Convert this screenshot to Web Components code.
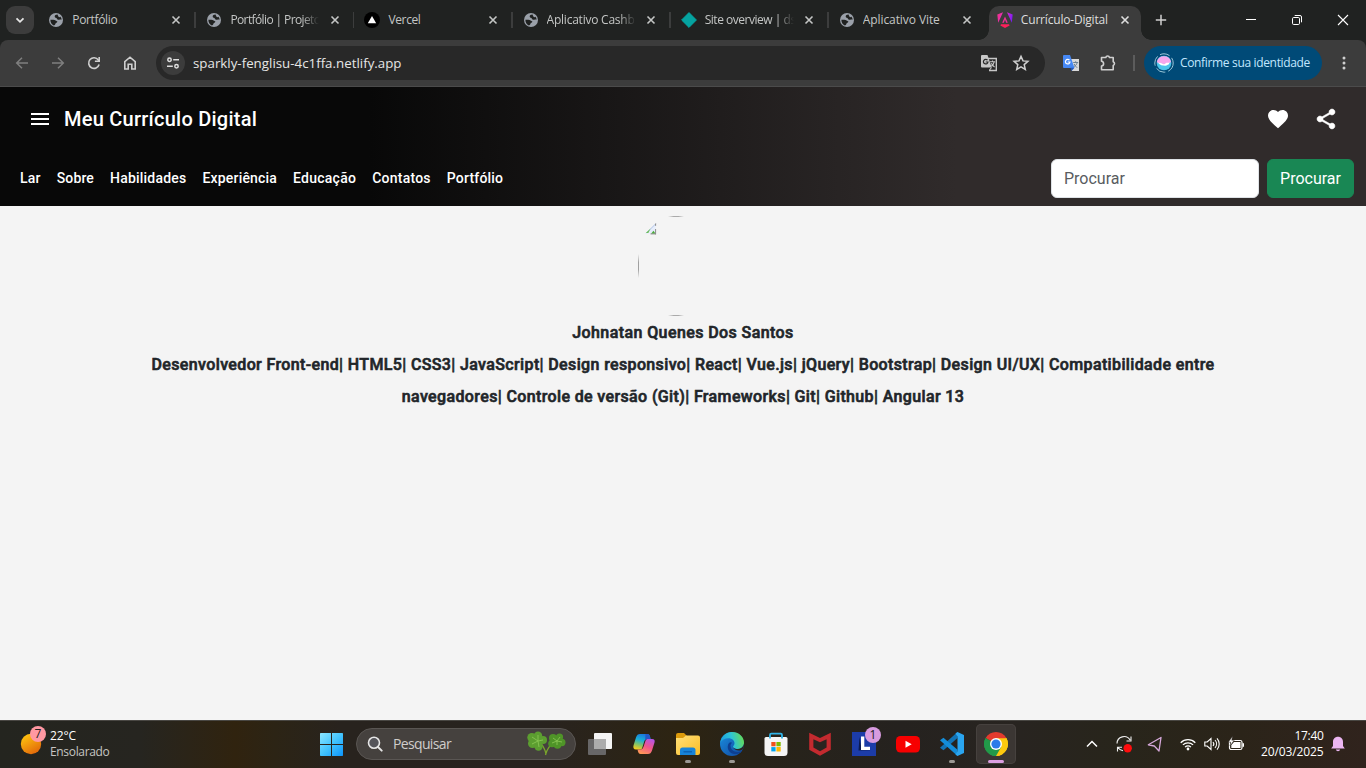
<!DOCTYPE html>
<html lang="pt-BR">
<head>
<meta charset="utf-8">
<title>Currículo-Digital</title>
<style>
html,body{margin:0;height:100%;overflow:hidden;background:#f4f4f4}
</style>
</head>
<body>
<desktop-screen></desktop-screen>
<script>
const UI = '"Open Sans","Noto Sans",sans-serif';
const define = (name, html, setup) => {
  const tpl = document.createElement('template');
  tpl.innerHTML = typeof html === 'string' ? html : '';
  customElements.define(name, class extends HTMLElement {
    connectedCallback() {
      if (this.shadowRoot) return;
      const root = this.attachShadow({ mode: 'open' });
      if (typeof html === 'function') root.innerHTML = html(this);
      else root.append(tpl.content.cloneNode(true));
      if (setup) setup(this, root);
    }
  });
};

/* A single-line label whose tracking is adjusted to span a given width. */
define('fit-text', '<style>:host{display:inline-block;white-space:pre;flex:none}</style><slot></slot>', el => {
  const w = +el.getAttribute('w');
  if (!w) return;
  const natural = el.getBoundingClientRect().width;
  el.style.letterSpacing = ((w - natural) / el.textContent.length) + 'px';
  el.style.width = w + 'px';
});

const ICONS = {
  globe: ['0 0 16 16', '<circle cx="8" cy="8" r="7" fill="#9aa0a9"/><path d="M2.400 7.800h3c1.800 0 2.700 1.600 4 1.600-.2 1.300-1.800 1.400-2 2.400-.2 1-.9 1.600-1.600 1.600C3.600 12.600 2.300 10.300 2.400 7.800z" fill="#202221"/><path d="M9.600 2.600C8 2.500 6.500 3.400 6.700 4.700c.2 1.200 1.900.7 2.100 1.700.2 1.200 1.900 1.700 3 1.200.8-.3 1.400-.2 1.900.1-.1-1.100-.5-2-1.200-2.900-1 .6-1.900.4-2.100-.3-.2-.7-.8-1.100-.8-1.900z" fill="#202221"/>'],
  vercel: ['0 0 16 16', '<circle cx="8" cy="8" r="8" fill="#000"/><path d="M8 4l4.200 7.300H3.800z" fill="#fff"/>'],
  diamond: ['0 0 16 16', '<path d="M8 .6L15.400 8 8 15.400.6 8z" fill="#05a3a0" stroke="#05a3a0" stroke-width="1" stroke-linejoin="round"/>'],
  angular: ['0 0 16 16', '<defs><linearGradient id="a" x1="0" x2="1" y1=".3" y2=".5"><stop offset="0" stop-color="#f0328b"/><stop offset=".5" stop-color="#e72bd0"/><stop offset="1" stop-color="#7a1bf2"/></linearGradient></defs><path d="M6 .3L.3 2.500l.9 8.300zM10 .3l5.700 2.200-.9 8.300z" fill="url(#a)"/><path d="M8 4.600L5.200 10.800h1.600L8 7.700l1.200 3.100h1.600z" fill="#f03098"/><path d="M4 12.200h8l.6 1.400L8 16l-4.600-2.400z" fill="#ff1f5a"/>'],
  close: ['0 0 10 10', '<path d="M1.500 1.500l7 7m0-7l-7 7" stroke="currentColor" stroke-width="1.600"/>'],
  chev: ['0 0 12 12', '<path d="M2.500 4.300L6 7.800l3.500-3.500" fill="none" stroke="#e6e6e6" stroke-width="1.800"/>'],
  plus: ['0 0 12 12', '<path d="M6 .8v10.400M.8 6h10.400" stroke="#d0d0d0" stroke-width="1.500"/>'],
  min: ['0 0 12 12', '<path d="M1 5.500h10" stroke="#fff"/>'],
  restore: ['0 0 12 12', '<rect x="1.500" y="3.500" width="7" height="7" rx="1.200" fill="none" stroke="#fff"/><path d="M3.700 1.500H9a1.500 1.500 0 0 1 1.500 1.500v5.300" fill="none" stroke="#fff"/>'],
  wclose: ['0 0 12 12', '<path d="M1 1l10 10m0-10L1 11" stroke="#fff" stroke-width="1.100"/>'],
  back: ['0 0 16 16', '<path d="M14 8H3m5-5.300L2.700 8 8 13.300" fill="none" stroke="#7f7f7f" stroke-width="1.500"/>'],
  fwd: ['0 0 16 16', '<path d="M2 8h11M8 2.700L13.300 8 8 13.300" fill="none" stroke="#7f7f7f" stroke-width="1.500"/>'],
  reload: ['0 0 16 16', '<path d="M13.100 9.500A5.300 5.300 0 1 1 12.300 5l.8.900" fill="none" stroke="#cfcfcf" stroke-width="1.600"/><path d="M13.200 2v4.300H8.900" fill="none" stroke="#cfcfcf" stroke-width="1.600"/>'],
  home: ['0 0 16 16', '<path d="M2.800 14V6.600L8 2.200l5.200 4.400V14H9.800V9.300H6.200V14z" fill="none" stroke="#cfcfcf" stroke-width="1.600"/>'],
  tune: ['0 0 14 14', '<g fill="none" stroke="#dedede" stroke-width="1.500"><circle cx="3.500" cy="3.700" r="1.700"/><circle cx="10.500" cy="10.300" r="1.700"/><path d="M7.200 3.700H13M1 10.300h5.800"/></g>'],
  gtrans: ['0 0 18 18', '<path d="M8 4.500h8.300v12H9" fill="none" stroke="#c7c7c7" stroke-width="1.400"/><path d="M1 2a1 1 0 0 1 1-1h5.500l4.200 12.500H2a1 1 0 0 1-1-1z" fill="#c7c7c7"/><path d="M7.500 6.200A2.300 2.300 0 1 0 8 8H5.700" fill="none" stroke="#282828" stroke-width="1.200"/><path d="M10 7.700h5.200M12.500 6.500v1.200m1.800 0c-.4 2-1.500 3.500-3 4.500m.1-3c.6 1.500 1.800 2.800 3.200 4M9.500 16l2-2.500" fill="none" stroke="#c7c7c7" stroke-width="1.100"/>'],
  gtransc: ['0 0 18 18', '<path d="M8 5h9v12H10z" fill="#d9d9d9"/><path d="M1 2a1 1 0 0 1 1-1h6l4.500 13H2a1 1 0 0 1-1-1z" fill="#4688f4"/><path d="M7.500 6.200A2.300 2.300 0 1 0 8 8H5.700" fill="none" stroke="#fff" stroke-width="1.200"/><path d="M11.200 8.500h5M13.700 7.200v1.300m1.500 0c-.5 2-1.500 3-3 4m0-2.500c.6 1.500 1.800 2.800 3 3.800" fill="none" stroke="#6b8093" stroke-width="1"/><path d="M9.500 17l3-3.200H8.400z" fill="#2557b8"/>'],
  star: ['0 0 18 18', '<path d="M9 2.400l2 4.500 4.900.4-3.700 3.300 1.100 4.800L9 12.900l-4.300 2.500 1.100-4.800L2.100 7.300 7 6.900z" fill="none" stroke="#cfcfcf" stroke-width="1.500"/>'],
  puzzle: ['0 0 18 18', '<path d="M2.500 3.500h4.300a1.900 1.900 0 0 1 3.700 0h3.700v4.300a1.900 1.900 0 0 1 0 3.600v4.300H2.500V12c2.800-.3 2.800-4.400 0-4.700z" fill="none" stroke="#cfcfcf" stroke-width="1.600" stroke-linejoin="round"/>'],
  avatar: ['0 0 20 20', '<circle cx="10" cy="10" r="9.200" fill="none" stroke="#9cc6d8" stroke-width="1" stroke-dasharray="10 3"/><circle cx="10" cy="10" r="7.300" fill="#4cc4ea"/><path d="M2.800 9a7.300 7.300 0 0 1 14.300 0c-2 1.800-4.200.4-5 2-.9 1.200-2.600.8-3.300-.1C7 10 4.500 11 2.800 9z" fill="#f5a7ec"/><path d="M4 9.800c2-.3 3.500.1 4.500 1 1.500.8 2.500.2 3.200-.6 1.200-1 2.500-.3 4-.6l-1 1.900c-1.500.4-1.500 1.200-3.500 1.200-3 0-5-.2-7.200-2.900z" fill="#fff"/>'],
  more: ['0 0 4 16', '<g fill="#cfcfcf"><circle cx="2" cy="3" r="1.500"/><circle cx="2" cy="8" r="1.500"/><circle cx="2" cy="13" r="1.500"/></g>'],
  menu: ['0 0 24 24', '<path fill="#fff" d="M3 18h18v-2H3v2zm0-5h18v-2H3v2zm0-7v2h18V6H3z"/>'],
  heart: ['0 0 24 24', '<path fill="#fff" d="M12 21.350l-1.450-1.320C5.400 15.360 2 12.280 2 8.500 2 5.420 4.420 3 7.500 3c1.740 0 3.410.810 4.500 2.090C13.090 3.810 14.760 3 16.500 3 19.580 3 22 5.420 22 8.500c0 3.780-3.400 6.860-8.550 11.540L12 21.350z"/>'],
  share: ['0 0 24 24', '<path fill="#fff" stroke="#fff" stroke-width=".5" d="M18 16.080c-.760 0-1.440.300-1.960.770L8.910 12.700c.050-.230.090-.460.090-.700s-.040-.470-.090-.700l7.050-4.110c.540.500 1.250.810 2.040.810 1.660 0 3-1.340 3-3s-1.340-3-3-3-3 1.340-3 3c0 .240.040.470.090.700L8.040 9.810C7.500 9.310 6.790 9 6 9c-1.660 0-3 1.340-3 3s1.340 3 3 3c.790 0 1.500-.310 2.040-.810l7.120 4.160c-.050.210-.080.430-.080.650 0 1.610 1.310 2.920 2.920 2.920 1.610 0 2.920-1.310 2.920-2.920s-1.310-2.920-2.920-2.920z"/>'],
  sun: ['0 0 22 22', '<defs><linearGradient id="s" x1=".2" y1="0" x2=".8" y2="1"><stop offset="0" stop-color="#ffc70f"/><stop offset="1" stop-color="#e0620a"/></linearGradient></defs><circle cx="11" cy="11" r="10.200" fill="url(#s)"/>'],
  win: ['0 0 24 24', '<defs><linearGradient id="w" x1="0" y1="0" x2="1" y2="1"><stop offset="0" stop-color="#8ce6ff"/><stop offset=".5" stop-color="#43c4fd"/><stop offset="1" stop-color="#0c94fb"/></linearGradient></defs><path fill="url(#w)" d="M1 1.700q0-.7.700-.7H12V12H1zM13 1h10.300q.7 0 .7.700V12H13zM1 13h11v11H1.700q-.7 0-.7-.7zM13 13h11v10.300q0 .7-.7.700H13z"/>'],
  search: ['0 0 16 16', '<circle cx="7" cy="6.800" r="5.500" fill="#55555a" stroke="#e6e6e6" stroke-width="1.600"/><path d="M11 11l3.700 3.700" stroke="#e6e6e6" stroke-width="1.900" stroke-linecap="round"/>'],
  clover: ['0 0 40 26', '<path d="M29 10c-5 4-8.500 9-9.500 14M12 9c4 4 7 9 8 14" fill="none" stroke="#7aa52c" stroke-width="1.300"/><g fill="#5c9e30"><circle cx="5.800" cy="6.500" r="4.500"/><circle cx="12" cy="4.800" r="4.200"/><circle cx="17" cy="9" r="4"/><circle cx="6.500" cy="12.500" r="4.500"/><circle cx="12.500" cy="15.500" r="4.200"/><circle cx="12" cy="10" r="4"/></g><g fill="#4f9428"><circle cx="27" cy="7" r="4"/><circle cx="33.500" cy="6" r="3.600"/><circle cx="35.800" cy="11.500" r="3.700"/><circle cx="31.500" cy="14" r="3.800"/><circle cx="26" cy="12.500" r="3.800"/><circle cx="31" cy="10" r="3.800"/></g><path d="M12 10L6 6m6 4V4m0 6l5-1m-5 1l-6 3m6-3l1 6M31 10l-4-3m4 3l3-4m-3 4l5 1m-5-1v4m0-4l-5 2" stroke="#8dc957" stroke-width=".8" fill="none"/>'],
  taskview: ['0 0 24 24', '<rect x="6" y="1" width="18" height="16" rx="1" fill="#f4f4f4"/><rect x="0" y="7" width="18" height="16" rx="1" fill="#77777acc"/><path d="M6 7h12v10H6z" fill="#acacac"/>'],
  copilot: ['0 0 24 24', '<defs><linearGradient id="c1" x1=".6" y1="0" x2=".3" y2="1"><stop offset="0" stop-color="#1b75dc"/><stop offset=".4" stop-color="#19afd7"/><stop offset=".7" stop-color="#7fc36b"/><stop offset="1" stop-color="#f4cc20"/></linearGradient><linearGradient id="c2" x1=".8" y1="0" x2=".3" y2="1"><stop offset="0" stop-color="#b455e8"/><stop offset=".5" stop-color="#f0558c"/><stop offset="1" stop-color="#ff9856"/></linearGradient></defs><path d="M8 2h7.500c1.500 0 2 1 2.500 2.500l.5 2.500h-3c-2 0-2.800 1-3.300 2.600l-2 6.400C9.700 17 9 17.500 8 17.500H4C1.500 17.500 1 15.500 1.500 13.500L4 5.500C4.800 3 6 2 8 2z" fill="url(#c1)"/><path d="M16 22H8.500C7 22 6.500 21 6 19.500L5.500 17.500h3c1.700 0 2.500-1.200 3-2.800l2-6C14 7.500 14.500 7 16 7h4c2.500 0 3 1.500 2.500 3.500L20 18.500C19.200 21 18 22 16 22z" fill="url(#c2)"/><path d="M13.500 2h2c1.500 0 2 1 2.500 2.500l.5 2.500h-3c-1 0-1.800.4-2.400 1z" fill="#2457c8"/>'],
  folder: ['0 0 24 24', '<defs><linearGradient id="f" x1="0" y1="0" x2="1" y2="1"><stop offset="0" stop-color="#ffe07a"/><stop offset="1" stop-color="#fbbd24"/></linearGradient></defs><path d="M0 3q0-2 2-2h6l2.500 2.500V9H0z" fill="#dc9a0b"/><path d="M0 6h7l3-2.500h12q2 0 2 2V21q0 2-2 2H2q-2 0-2-2z" fill="url(#f)"/><path d="M4 23v-5q0-2.500 2.500-2.500h10.500q2.500 0 2.500 2.500v5z" fill="#1784d8"/><path d="M7.500 19.800h8.500" stroke="#0b5cad" stroke-width="1.200"/>'],
  edge: ['0 0 24 24', '<defs><linearGradient id="e1" x1="0" y1=".5" x2="1" y2=".3"><stop offset="0" stop-color="#1a9de0"/><stop offset=".5" stop-color="#2ec4d5"/><stop offset="1" stop-color="#68dd4e"/></linearGradient><linearGradient id="e2" x1="0" y1="0" x2="1" y2="1"><stop offset="0" stop-color="#1a8fe0"/><stop offset="1" stop-color="#10459c"/></linearGradient></defs><circle cx="12" cy="12" r="12" fill="url(#e2)"/><path d="M.2 11C1 4.500 6 0 12 0c7 0 12 5 12 10.500 0 4-3 6.500-6.500 6.500-3 0-4.500-1.200-4.500-2.300 0-.8 1.500-1.300 1.500-3.400C14.500 8.500 12 6.300 8.500 6.300 5 6.300 1.500 8 .2 11z" fill="url(#e1)"/><path d="M9 11c-3 4-.5 10 5 11 3 .4 5.500-.6 7.500-2.300.3-.3 0-.7-.4-.5-5 2-10.500-.5-10.600-5.500 0-1.200.8-2.200 1.500-3C11.500 10 10 10 9 11z" fill="#0d3f91"/><path d="M22.700 17.200C20 19.500 13.800 18.500 12.900 14.500c.6 2 3 2.500 4.600 2.500 3 0 5.800-1.800 6.500-5 .1 1.800-.4 3.700-1.300 5.200z" fill="#2b2620"/>'],
  store: ['0 0 24 24', '<path d="M6 6V3q0-1.300 1.300-1.300h9.400Q18 1.700 18 3v3" fill="none" stroke="#30b4e8" stroke-width="1.800"/><path d="M.5 6.500q0-1.500 1.500-1.500h20q1.500 0 1.500 1.500v14q0 3.500-3.500 3.500H4q-3.500 0-3.500-3.500z" fill="#f5f5f5"/><path d="M6 5v1.500M18 5v1.500" stroke="#30b4e8" stroke-width="1.800"/><path d="M7.300 10h4.300v4.300H7.300z" fill="#f1511b"/><path d="M12.400 10h4.300v4.300h-4.300z" fill="#7fba00"/><path d="M7.300 15.100h4.300v4.300H7.300z" fill="#00a3ee"/><path d="M12.400 15.100h4.300v4.300h-4.300z" fill="#feb800"/>'],
  mcafee: ['0 0 24 24', '<path d="M1.200.7L12 5.900 22.800.7v17L12 23.800 1.200 17.700z" fill="#c32a2f"/><path d="M5.400 7.200L12 10.300l6.600-3.100v8.400L12 19.300l-6.600-3.700z" fill="#2a2420"/>'],
  lapp: ['0 0 24 24', '<path d="M0 0h24v24H0z" fill="#1c3ca8"/><path d="M7.500 5l-1 13.500 11.500-.2V17H9.500z" fill="#0b1b50"/><path d="M9 4.500h3.300v10.200H18V18H9z" fill="#fff"/>'],
  youtube: ['0 0 24 24', '<rect y="4" width="24" height="16.500" rx="4.500" fill="#f70000"/><path d="M9.500 8.700l6.200 3.500-6.200 3.600z" fill="#fff"/>'],
  vscode: ['0 0 24 24', '<path d="M17.500 0v6L3.500 18.200 0 15.800z" fill="#1273b5"/><path d="M17.500 24v-6.200L3.500 5.800 0 8.200z" fill="#148dd9"/><path d="M17.500 0L24 3v18l-6.500 3-2-1.500 2-3.300V4.500l-2-3z" fill="#2aa5f0"/>'],
  chrome: ['0 0 24 24', '<path d="M12 12L1.610 6A12 12 0 0 1 22.390 6z" fill="#e33b2e"/><path d="M12 12l10.390-6A12 12 0 0 1 12 24z" fill="#fdc90f"/><path d="M12 12v12A12 12 0 0 1 1.610 6z" fill="#229a49"/><path d="M12 6.200h10.500A12 12 0 0 1 12 24l5.200-9z" fill="#fdc90f"/><path d="M6.900 14.900L1.610 6A12 12 0 0 0 12 24l5.200-9z" fill="#229a49"/><circle cx="12" cy="12" r="6" fill="#fff"/><circle cx="12" cy="12" r="4.600" fill="#2b7bea"/>'],
  up: ['0 0 12 12', '<path d="M1 8.500l5-5 5 5" fill="none" stroke="#fff" stroke-width="1.500"/>'],
  sync: ['0 0 18 18', '<path d="M2 8.500A7 7 0 0 1 15 5m1-3.500V6h-4.500M2.500 16.500V12.200H7M3 12.500c1 1.700 3 3 5 3.300" fill="none" stroke="#efefef" stroke-width="1.100"/><circle cx="12.700" cy="13.300" r="4.200" fill="#ff0d0d"/>'],
  nav: ['0 0 16 16', '<path d="M14 1.500L1.300 8.800l6 1.200 4.700 5z" fill="none" stroke="#d7a9dc" stroke-width="1.300" stroke-linejoin="round"/>'],
  wifi: ['0 0 16 16', '<g fill="none" stroke="#fff" stroke-width="1.300"><path d="M.7 6.700a10.300 10.300 0 0 1 14.600 0M2.900 8.900a7.200 7.200 0 0 1 10.200 0M5.100 11.100a4.100 4.100 0 0 1 5.800 0"/></g><circle cx="8" cy="13" r="1.400" fill="#fff"/>'],
  sound: ['0 0 16 16', '<path d="M.8 6h2.400L7 2.500v11L3.200 10H.8zM9 6a3 3 0 0 1 0 4M11 4a6 6 0 0 1 0 8M13 2.300a8.500 8.500 0 0 1 0 11.400" fill="none" stroke="#fff" stroke-width="1.100"/>'],
  battery: ['0 0 16 16', '<rect x="1.500" y="4.500" width="12.500" height="9" rx="1.800" fill="none" stroke="#fff" stroke-width="1.200"/><path d="M3.300 9L6 6h6.500v6H3.300zM14.500 7.300H16v3.400h-1.500z" fill="#fff"/><path d="M4.500.2L.3 6.200h2.400L2 10l4.200-5.700H3.800z" fill="#fff" stroke="#28221c" stroke-width=".5"/>'],
  bell: ['0 0 16 16', '<path d="M8 .8c-3 0-5 2.200-5 5.200v4L1.200 12.500h13.600L13 10V6C13 3 11 .8 8 .8zM5.800 13.500a2.300 2.300 0 0 0 4.400 0z" fill="#ecb6f2"/>'],
  broken: ['0 0 16 16', '<path d="M13.500 3L3.500 12.500h10z" fill="#e6edfb"/><path d="M4.300 12.200l9.500-9.500" stroke="#9fb6df" stroke-width=".8"/><path d="M3.800 12l4.800-4.500L6.300 12z" fill="#6cbd5a"/><path d="M9 12.700l2.500-3 1.800 2.500v.5z" fill="#4caf3a"/><path d="M8.500 12.900H14M13.600 2.500v2.300M13.600 8v5.400" fill="none" stroke="#8a8a8a" stroke-width="1"/>']
};
define('ui-icon', el => {
  const [vb, body] = ICONS[el.getAttribute('name')], w = +el.getAttribute('w') || 16, h = +el.getAttribute('h') || w;
  return `<style>:host{display:block;flex:none;width:${w}px;height:${h}px}svg{display:block}</style><svg width="${w}" height="${h}" viewBox="${vb}">${body}</svg>`;
});

define('browser-tab', el => `<style>
:host{display:flex;align-items:center;box-sizing:border-box;width:158.1px;height:34px;padding:0 0 6px 10px;flex:none;position:relative;color:#c4c6c5;font:12px/16px ${UI}}
:host([active]){color:#dedede}
:host([active])::before{content:"";position:absolute;inset:0 4px 0 2px;background:#3c3c3c;border-radius:10px 10px 0 0}
:host([active])::after{content:"";position:absolute;left:-8px;right:-6px;bottom:0;height:10px;background:radial-gradient(circle at 0 0,transparent 9.500px,#3c3c3c 10px) left/10px 10px no-repeat,radial-gradient(circle at 10px 0,transparent 9.500px,#3c3c3c 10px) right/10px 10px no-repeat}
ui-icon,.t{position:relative;z-index:1}
.t{width:90px;overflow:hidden;margin-left:8px}
:host([fade]) .t{-webkit-mask:linear-gradient(90deg,#000 72px,transparent 89px)}
.x{margin-left:9.500px}
.sep{width:2px;height:16px;background:#3c3d3d;margin-left:13px}
:host([last]) .sep,:host([active]) .sep{display:none}
</style><ui-icon name="${el.getAttribute('icon')}"></ui-icon><div class="t"><slot></slot></div><ui-icon class="x" name="close" w="10"></ui-icon><i class="sep"></i>`);

define('tab-strip', `<style>
:host{display:flex;height:40px;background:#202221;box-sizing:border-box;padding:6px 0 0 6px}
.pick{width:28px;height:28px;border-radius:9px;background:#3c3c3c;display:grid;place-items:center}
.tabs{display:flex;margin-left:4.300px}
.new{margin:8px 0 0 9.700px}
.win{display:flex;gap:34px;margin:8px 17px 0 auto}
</style>
<div class="pick"><ui-icon name="chev" w="12"></ui-icon></div>
<div class="tabs">
<browser-tab icon="globe"><fit-text w="45">Portfólio</fit-text></browser-tab>
<browser-tab icon="globe" fade><fit-text w="90">Portfólio | Projeto</fit-text></browser-tab>
<browser-tab icon="vercel"><fit-text w="32">Vercel</fit-text></browser-tab>
<browser-tab icon="globe" fade><fit-text w="88">Aplicativo Cashb</fit-text></browser-tab>
<browser-tab icon="diamond" fade><fit-text w="91">Site overview | ds</fit-text></browser-tab>
<browser-tab icon="globe" last><fit-text w="77">Aplicativo Vite</fit-text></browser-tab>
<browser-tab icon="angular" active><fit-text w="87">Currículo-Digital</fit-text></browser-tab>
</div>
<ui-icon class="new" name="plus" w="12"></ui-icon>
<div class="win"><ui-icon name="min" w="12"></ui-icon><ui-icon name="restore" w="12"></ui-icon><ui-icon name="wclose" w="12"></ui-icon></div>`);

define('address-bar', `<style>
:host{display:block;background:#202221}
.bar{display:flex;align-items:center;height:47px;box-sizing:border-box;background:#3c3c3c;border-radius:8px 8px 0 0;border-bottom:1px solid #4b4b4b;padding:0 20px 0 14px}
.nav{display:flex;gap:20px}
.url{display:flex;align-items:center;box-sizing:border-box;width:889px;height:34px;border-radius:17px;background:#282828;margin-left:18px;padding:0 15px 0 5px;color:#e6e6e6;font:13.300px/18px ${UI}}
.tune{width:24px;height:24px;border-radius:50%;background:#3c3c3c;display:grid;place-items:center;margin-right:8px}
.a{margin-left:auto;margin-right:14px}
.sep{width:2px;height:16px;background:#5c5c5c;margin:0 9px 0 16px}
.id{display:flex;align-items:center;box-sizing:border-box;width:178px;height:34px;border-radius:17px;background:#004a77;color:#c2e7ff;padding-left:10px;gap:6px;font:12px/16px ${UI}}
</style><div class="bar">
<div class="nav"><ui-icon name="back"></ui-icon><ui-icon name="fwd"></ui-icon><ui-icon name="reload"></ui-icon><ui-icon name="home"></ui-icon></div>
<div class="url"><span class="tune"><ui-icon name="tune" w="14"></ui-icon></span><fit-text w="208.5">sparkly-fenglisu-4c1ffa.netlify.app</fit-text><ui-icon class="a" name="gtrans" w="18"></ui-icon><ui-icon name="star" w="18"></ui-icon></div>
<ui-icon name="gtransc" w="18" style="margin-left:17px"></ui-icon><ui-icon name="puzzle" w="18" style="margin-left:19px"></ui-icon><i class="sep"></i>
<div class="id"><ui-icon name="avatar" w="20"></ui-icon><fit-text w="130">Confirme sua identidade</fit-text></div>
<ui-icon name="more" w="4" h="16" style="margin-left:auto"></ui-icon>
</div>`);

define('site-header', `<style>
:host{display:block;height:119px;background:linear-gradient(90deg,#080808 27%,#302b2b 70%);color:#fff;font-family:Roboto,sans-serif}
.top{display:flex;align-items:center;height:64px;padding:0 28px}
h1{margin:0 auto 0 12px;font:500 20px/32px Roboto,sans-serif}
.row{display:flex;align-items:center;height:55px;box-sizing:border-box;padding:0 12px 0 20px}
nav{display:flex;gap:16px;font:500 14px/20px Roboto,sans-serif;padding-bottom:2px}
input,button{box-sizing:border-box;height:39px;border-radius:6px;font:16px/24px Roboto,sans-serif;padding:0 12px;border:1px solid #dee2e6;margin:0}
input{width:208px;margin:0 8px 0 auto;background:#fff}
input::placeholder{color:#595c5f;opacity:1}
button{width:87px;background:#198754;border-color:#198754;color:#fff;white-space:nowrap}
</style>
<div class="top"><ui-icon name="menu" w="24"></ui-icon><h1><fit-text w="193">Meu Currículo Digital</fit-text></h1><ui-icon name="heart" w="24"></ui-icon><ui-icon name="share" w="24" style="margin-left:24px"></ui-icon></div>
<div class="row"><nav><fit-text w="20.7">Lar</fit-text><fit-text w="37.3">Sobre</fit-text><fit-text w="76.5">Habilidades</fit-text><fit-text w="74.5">Experiência</fit-text><fit-text w="63.2">Educação</fit-text><fit-text w="58.6">Contatos</fit-text><fit-text w="56.5">Portfólio</fit-text></nav>
<input placeholder="Procurar" aria-label="Procurar"><button>Procurar</button></div>`);

define('profile-intro', `<style>
:host{display:flex;flex-direction:column;align-items:center;flex:1;padding-top:10px;background:#f4f4f4;color:#212529;font:500 16px/32px Roboto,sans-serif;-webkit-text-stroke:.6px #212529}
.photo{width:90px;height:100px;position:relative;box-sizing:border-box;margin-bottom:1px}
.photo svg{display:block}
.pic{position:absolute;left:4px;top:5px}
</style>
<div class="photo"><svg width="90" height="100"><defs><linearGradient id="h"><stop offset="0" stop-color="#aaa" stop-opacity="0"/><stop offset=".35" stop-color="#aaa"/><stop offset=".65" stop-color="#aaa"/><stop offset="1" stop-color="#aaa" stop-opacity="0"/></linearGradient><linearGradient id="v" x2="0" y2="1"><stop offset="0" stop-color="#a0a0a0" stop-opacity="0"/><stop offset=".35" stop-color="#a0a0a0"/><stop offset=".65" stop-color="#a0a0a0"/><stop offset="1" stop-color="#a0a0a0" stop-opacity="0"/></linearGradient></defs><path d="M30 0h16v1H30zM30 99h16v1H30z" fill="url(#h)"/><path d="M0 38h1v24H0z" fill="url(#v)"/></svg><ui-icon class="pic" name="broken" w="16"></ui-icon></div>
<fit-text w="221.5">Johnatan Quenes Dos Santos</fit-text>
<fit-text w="1063">Desenvolvedor Front-end| HTML5| CSS3| JavaScript| Design responsivo| React| Vue.js| jQuery| Bootstrap| Design UI/UX| Compatibilidade entre</fit-text>
<fit-text w="562.5">navegadores| Controle de versão (Git)| Frameworks| Git| Github| Angular 13</fit-text>`);

define('task-app', el => `<style>
:host{display:grid;place-items:center;position:relative;box-sizing:border-box;width:40px;height:40px;border-radius:5px;flex:none}
:host([active]){background:#3b3633;box-shadow:inset 0 0 0 1px #46413e}
:host([run])::after{content:"";position:absolute;bottom:1px;left:17px;width:6px;height:3px;border-radius:2px;background:#9b9894}
:host([active])::after{left:12px;width:16px;background:#dc9fe2}
b{position:absolute;left:21px;top:3px;width:16px;height:16px;border-radius:50%;background:#d89be0;color:#222;font:12px/16px ${UI};text-align:center}
</style><ui-icon name="${el.getAttribute('icon')}" w="24"></ui-icon>${el.hasAttribute('badge') ? `<b>${el.getAttribute('badge')}</b>` : ''}`);

define('task-bar', `<style>
:host{display:flex;align-items:center;position:relative;height:48px;box-sizing:border-box;border-top:1px solid #494743;padding-bottom:1px;background:linear-gradient(90deg,#24251f 0,#262520 140px,#30230f 235px,#2c2415 275px,#28231e 340px,#28231f 540px,#2d2412 680px,#282319 750px,#25221f 900px,#282420 1020px,#28251b 1120px,#2b2419 1240px,#30231d 1366px);color:#fff;font:12px/16px ${UI}}
.weather{display:flex;align-items:center;width:299px;padding-left:20px;box-sizing:border-box;position:relative}
.weather b{position:absolute;left:30px;top:-2px;width:16px;height:16px;border-radius:50%;background:#ff98a2;color:#222;font:12px/16px ${UI};text-align:center}
.weather div{display:flex;flex-direction:column;align-items:flex-start;margin-left:8px}
.dim{color:#c6c5c2}
.start{margin-left:20px}
.search{display:flex;align-items:center;box-sizing:border-box;width:220px;height:32px;border-radius:16px;background:#45413e;border:1px solid #5a5653;margin:0 4px 0 13px;padding:0 9px 0 10px;color:#d0cdcb;font-size:14px}
.apps{display:flex;gap:4px}
.tray{display:flex;align-items:center;margin-left:auto;padding-right:20px}
.time{display:flex;flex-direction:column;align-items:flex-end;margin:0 6.500px 0 17.500px}
</style>
<div class="weather"><ui-icon name="sun" w="22"></ui-icon><b>7</b><div><fit-text w="26">22°C</fit-text><fit-text class="dim" w="59.5">Ensolarado</fit-text></div></div>
<ui-icon class="start" name="win" w="24"></ui-icon>
<div class="search"><ui-icon name="search" w="16"></ui-icon><fit-text w="58" style="margin-left:10px">Pesquisar</fit-text><ui-icon name="clover" w="40" h="26" style="margin-left:auto"></ui-icon></div>
<div class="apps"><task-app icon="taskview"></task-app><task-app icon="copilot"></task-app><task-app icon="folder" run></task-app><task-app icon="edge" run></task-app><task-app icon="store"></task-app><task-app icon="mcafee"></task-app><task-app icon="lapp" badge="1"></task-app><task-app icon="youtube"></task-app><task-app icon="vscode" run></task-app><task-app icon="chrome" run active></task-app></div>
<div class="tray"><ui-icon name="up" w="12"></ui-icon><ui-icon name="sync" w="18" style="margin-left:17px"></ui-icon><ui-icon name="nav" style="margin-left:14px"></ui-icon><ui-icon name="wifi" style="margin-left:17px"></ui-icon><ui-icon name="sound" style="margin-left:8px"></ui-icon><ui-icon name="battery" style="margin-left:8px"></ui-icon><div class="time"><fit-text w="29">17:40</fit-text><fit-text w="62.5">20/03/2025</fit-text></div><ui-icon name="bell"></ui-icon></div>`);

define('desktop-screen', `<style>:host{display:flex;flex-direction:column;width:1366px;height:768px;overflow:hidden}</style>
<tab-strip></tab-strip><address-bar></address-bar><site-header></site-header><profile-intro></profile-intro><task-bar></task-bar>`);
</script>
</body>
</html>
